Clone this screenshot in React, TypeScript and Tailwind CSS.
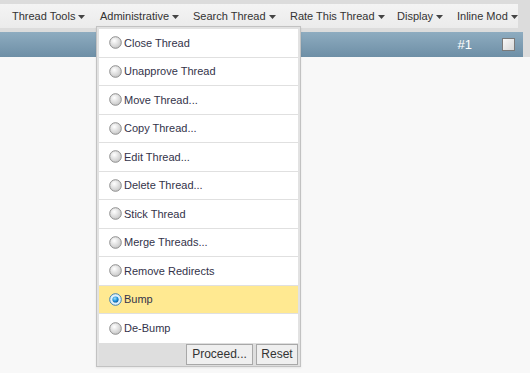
import React from "react";

const font = { fontFamily: '"Liberation Sans", Arial, sans-serif' };

function Arrow() {
  return (
    <svg width="7" height="4" viewBox="0 0 7 4" className="ml-[3px] mt-[1px]">
      <polygon points="0,0 7,0 3.5,4" fill="#444" />
    </svg>
  );
}

function Radio({ checked }: { checked?: boolean }) {
  return (
    <svg width="13" height="13" viewBox="0 0 13 13" className="shrink-0">
      <defs>
        <radialGradient id="rg" cx="40%" cy="35%" r="70%">
          <stop offset="0%" stopColor="#ffffff" />
          <stop offset="100%" stopColor="#c4c4c4" />
        </radialGradient>
        <radialGradient id="rb" cx="40%" cy="35%" r="70%">
          <stop offset="0%" stopColor="#9fe0ff" />
          <stop offset="60%" stopColor="#1a8fd6" />
          <stop offset="100%" stopColor="#0a4f8a" />
        </radialGradient>
      </defs>
      <circle cx="6.5" cy="6.5" r="5.8" fill={checked ? "#dff0fb" : "url(#rg)"} stroke={checked ? "#3c7fb1" : "#8e8e8e"} strokeWidth="1" />
      {checked && <circle cx="6.5" cy="6.5" r="3.1" fill="url(#rb)" />}
    </svg>
  );
}

const items = [
  "Close Thread",
  "Unapprove Thread",
  "Move Thread...",
  "Copy Thread...",
  "Edit Thread...",
  "Delete Thread...",
  "Stick Thread",
  "Merge Threads...",
  "Remove Redirects",
  "Bump",
  "De-Bump",
];

export default function App() {
  const tools = [
    { label: "Thread Tools", w: "w-[88px]" },
    { label: "Administrative", w: "w-[93px]" },
    { label: "Search Thread", w: "w-[97px]" },
    { label: "Rate This Thread", w: "w-[107px]" },
    { label: "Display", w: "w-[60px]" },
    { label: "Inline Mod", w: "w-[67px]" },
  ];
  return (
    <div className="relative w-[530px] h-[373px] overflow-hidden bg-[#f8f8f8] text-[11px]" style={font}>
      <div className="bg-[#dcdcdc] pt-[4px] pb-[4px]">
        <div className="flex items-center h-[24px] w-[518px] bg-gradient-to-b from-[#f4f4f4] to-[#ebebeb] pl-[12px] text-[#333]">
          {tools.map((t) => (
            <div key={t.label} className={`flex items-center ${t.w} shrink-0`}>
              <span>{t.label}</span>
              <Arrow />
            </div>
          ))}
        </div>
      </div>
      <div className="flex bg-[#dcdcdc]">
        <div className="flex items-center justify-end w-[523px] h-[25px] bg-gradient-to-b from-[#8eacc0] to-[#6e8fa6] pr-[8px]">
          <span className="text-white text-[13px] mr-[30px]">#1</span>
          <div className="w-[13px] h-[13px] border border-[#7a7a7a] bg-gradient-to-br from-[#f8f8f8] to-[#d8d8d8]" />
        </div>
      </div>

      <div className="absolute left-[96px] top-[26px] w-[205px] border border-[#c2c2c2] bg-[#e2e2e2] px-[2px] pt-[2px] shadow-[0_1px_2px_rgba(0,0,0,0.08)]">
        <div className="bg-white">
          {items.map((it, i) => (
            <div
              key={it}
              className={`flex items-center h-[28.5px] pl-[10px] gap-[2px] text-[#33334a] ${
                i < items.length - 1 ? "border-b border-[#e0e0e0]" : ""
              } ${it === "Bump" ? "bg-[#ffe991]" : ""}`}
            >
              <Radio checked={it === "Bump"} />
              <span>{it}</span>
            </div>
          ))}
        </div>
        <div className="flex justify-end gap-[3px] h-[23px] pt-[1px] pb-[2px] bg-[#dedede]">
          <button className="h-[21px] w-[67px] border border-[#a8a8a8] bg-[#efefef] text-[12px] text-[#333]" style={font}>
            Proceed...
          </button>
          <button className="h-[21px] w-[42px] border border-[#a8a8a8] bg-[#efefef] text-[12px] text-[#333]" style={font}>
            Reset
          </button>
        </div>
      </div>
    </div>
  );
}
